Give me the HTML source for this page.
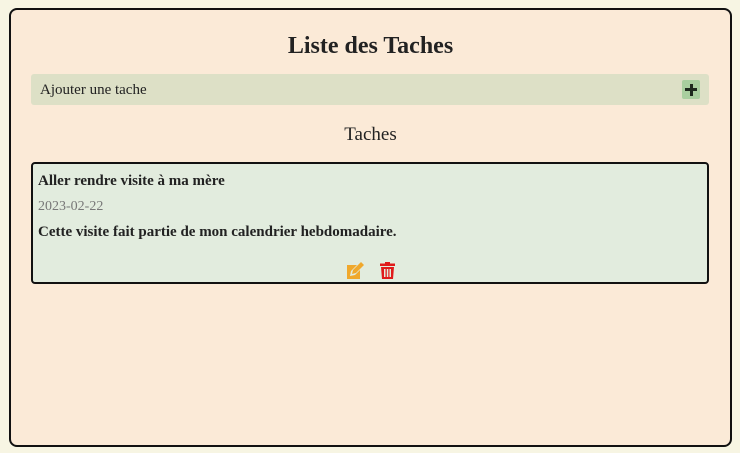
<!DOCTYPE html>
<html><head><style>
html,body{margin:0;padding:0;}
body{width:740px;height:453px;background:#f7f5e3;font-family:"Liberation Serif",serif;color:#222;position:relative;overflow:hidden;}
.box{position:absolute;left:9px;top:8px;width:719px;height:435px;border:2px solid #111;border-radius:8px;background:#fbead7;}
h1{position:absolute;left:0;right:0;top:21px;margin:0;text-align:center;font-size:24px;font-weight:bold;line-height:30px;}
.add{position:absolute;left:20px;top:64px;width:678px;height:31px;background:#dde0c6;border-radius:3px;}
.add span{position:absolute;left:9px;top:7px;font-size:15px;line-height:18px;}
.plus{position:absolute;left:651px;top:6px;width:18px;height:19px;background:#a9cf9f;border-radius:2px;}
.plus:before{content:"";position:absolute;left:3px;top:8px;width:12px;height:3px;background:#1e2a1e;}
.plus:after{content:"";position:absolute;left:7.5px;top:3.5px;width:3px;height:12px;background:#1e2a1e;}
h2{position:absolute;left:0;right:0;top:113px;margin:0;text-align:center;font-size:19px;font-weight:normal;line-height:24px;}
.task{position:absolute;left:20px;top:152px;width:674px;height:118px;border:2px solid #111;border-radius:4px;background:#e2ecde;}
.t{position:absolute;left:5px;font-size:15px;font-weight:bold;}
.d{position:absolute;left:5px;top:35px;font-size:14px;color:#777;}
</style></head><body>
<div class="box">
<h1>Liste des Taches</h1>
<div class="add"><span>Ajouter une tache</span><div class="plus"></div></div>
<h2>Taches</h2>
<div class="task">
<div class="t" style="top:9px">Aller rendre visite à ma mère</div>
<div class="d">2023-02-22</div>
<div class="t" style="top:60px">Cette visite fait partie de mon calendrier hebdomadaire.</div>
<svg style="position:absolute;left:313px;top:98px" width="19" height="17" viewBox="0 0 19 17">
<path d="M1 3h10L5 9l-1 5 5-1 5-5v9H1z" fill="#f0a82c"/>
<path d="M6 12l1-4 8-8 3 3-8 8z" fill="#f0a82c"/>
</svg>
<svg style="position:absolute;left:347px;top:98px" width="15" height="17" viewBox="0 0 15 17">
<path d="M5 0h5v1.5h5v2.5H0V1.5h5z" fill="#e01b1b"/>
<path d="M1 5h13l-1 12H2zM4 7v8h1.5V7zM6.8 7v8h1.5V7zM9.5 7v8H11V7z" fill="#e01b1b" fill-rule="evenodd"/>
</svg>
</div>
</div>
</body></html>
